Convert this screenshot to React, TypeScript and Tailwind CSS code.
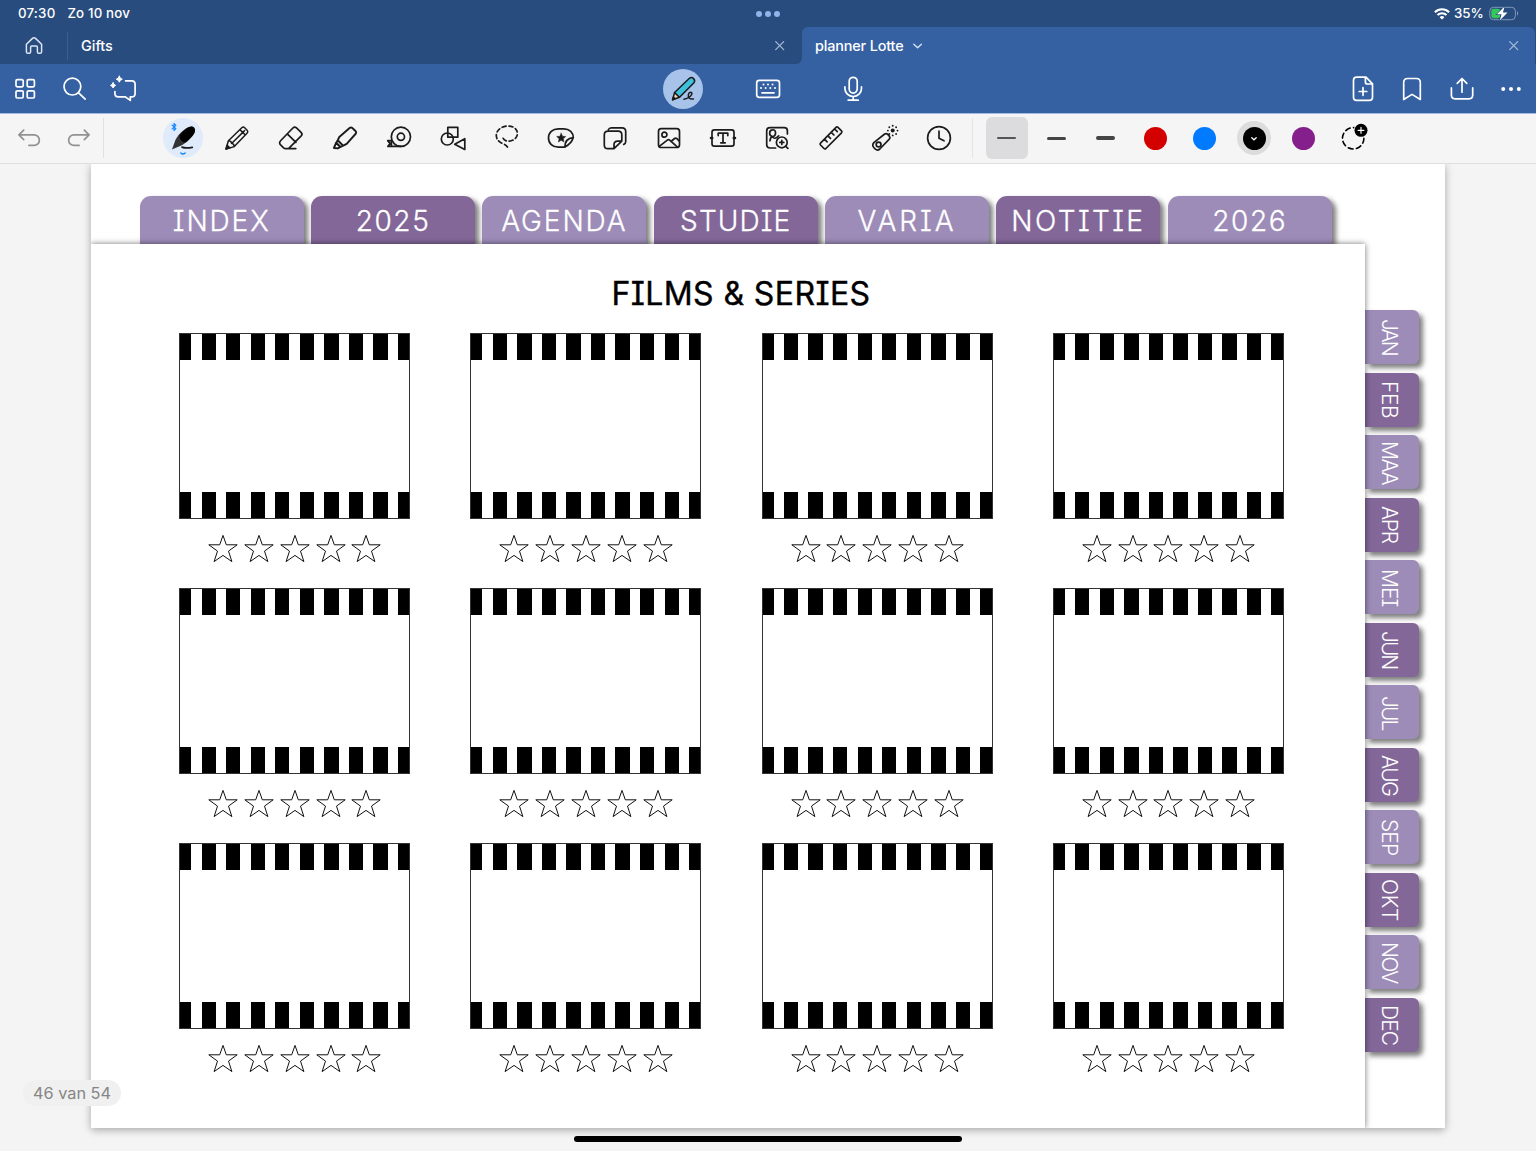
import React from "react";

type IcoProps = { children: React.ReactNode; className?: string; sw?: number };

const Ico = ({ children, className = "text-[#1b1b1b]", sw = 1.7 }: IcoProps) => (
  <svg
    width="32"
    height="32"
    viewBox="-16 -16 32 32"
    fill="none"
    stroke="currentColor"
    strokeWidth={sw}
    strokeLinecap="round"
    strokeLinejoin="round"
    className={`shrink-0 overflow-visible ${className}`}
  >
    {children}
  </svg>
);

const StatusBar = () => (
  <div className="flex h-[27px] items-center bg-[#294c7e] text-[13.3px] font-medium text-white">
    <div className="flex w-[751px] gap-[12px] pl-[18px]">
      <span className="tracking-[0.2px]">07:30</span>
      <span className="tracking-[0.15px]">Zo 10 nov</span>
    </div>
    <div className="flex w-[34px] justify-center gap-[3px]">
      <i className="size-[6px] rounded-full bg-[#8fb3ea]" />
      <i className="size-[6px] rounded-full bg-[#8fb3ea]" />
      <i className="size-[6px] rounded-full bg-[#8fb3ea]" />
    </div>
    <div className="ml-auto flex items-center pr-[17px]">
      <svg width="16" height="12" viewBox="0 0 16 12" fill="none" stroke="white" strokeWidth="2.1">
        <path d="M0.9 4.2a10.2 10.2 0 0 1 14.2 0" />
        <path d="M3.5 7a6.5 6.5 0 0 1 9 0" />
        <path d="M8 11.6 5.6 9.2a3.4 3.4 0 0 1 4.8 0Z" fill="white" stroke="none" />
      </svg>
      <span className="ml-[4px] mr-[5px] w-[30px]">35%</span>
      <svg width="30" height="16" viewBox="0 0 30 16" fill="none">
        <rect x="0.8" y="1.3" width="25.6" height="12.4" rx="3.8" stroke="#7f99bd" />
        <path d="M28 5.3c1.5.6 1.5 3.8 0 4.4Z" fill="#7f99bd" />
        <rect x="2.3" y="2.8" width="9" height="9.4" rx="2.4" fill="#34c759" />
        <path d="M15.6.5 7.9 8.3h4.6L10.8 14.5l7.7-7.9h-4.6Z" fill="white" stroke="#294c7e" strokeWidth="1.2" paintOrder="stroke" />
      </svg>
    </div>
  </div>
);

const Close = () => (
  <Ico className="text-[#a9bcd9]" sw={1.2}>
    <path d="M-4.3-4.3 3.7 3.7M3.7-4.3-4.3 3.7" />
  </Ico>
);

const TabBar = () => (
  <div className="flex h-[37px] bg-[#3561a3] text-[14.4px] font-medium text-white">
    <div className="flex w-[802px] items-center rounded-br-[6px] bg-[#294c7e]">
      <div className="flex w-[67px] justify-center">
        <Ico className="text-[#dbe5f4]" sw={1.5}>
          <path d="M-7.6-1.7-1.5-7.6q1.5-1.3 3 0L7.6-1.7V5.7q0 1.6-1.6 1.6H4.8q-1.4 0-1.4-1.4V1.3q0-1.2-1.2-1.2h-4.4q-1.2 0-1.2 1.2v4.6q0 1.4-1.4 1.4H-6q-1.6 0-1.6-1.6Z" />
        </Ico>
      </div>
      <div className="h-[28px] w-px bg-[#3e5f8d]" />
      <span className="ml-[13px]">Gifts</span>
      <div className="ml-auto mr-[6px]">
        <Close />
      </div>
    </div>
    <div className="flex flex-1 bg-[#294c7e]">
      <div className="mr-px flex flex-1 items-center rounded-t-[6px] bg-[#3561a3] pl-[13px]">
        <span className="w-[89px] whitespace-nowrap tracking-[-0.15px]">planner Lotte</span>
        <svg width="10" height="6" viewBox="0 0 10 6" fill="none" stroke="#dbe5f4" strokeWidth="1.3" strokeLinecap="round" strokeLinejoin="round" className="ml-[9px]">
          <path d="M0.8 1.2 4.6 4.8 8.4 1.2" />
        </svg>
        <div className="ml-auto mr-[5px]">
          <Close />
        </div>
      </div>
    </div>
  </div>
);

const NavBar = () => (
  <div className="flex h-[50px] items-center border-b border-[#a3bbe0] bg-[#3561a3] text-white">
    <div className="flex w-[641px]">
      <div className="flex w-[49px] justify-center">
        <Ico className="text-white">
          <rect x="-9" y="-9.4" width="7.2" height="7.2" rx="1.3" />
          <rect x="2.2" y="-9.4" width="7.2" height="7.2" rx="1.3" />
          <rect x="-9" y="1.8" width="7.2" height="7.2" rx="1.3" />
          <rect x="2.2" y="1.8" width="7.2" height="7.2" rx="1.3" />
        </Ico>
      </div>
      <div className="flex w-[49px] justify-center">
        <Ico className="text-white">
          <circle cx="-1.6" cy="-2.4" r="8.4" />
          <path d="m4.6 3.8 6.6 6.4" />
        </Ico>
      </div>
      <div className="flex w-[50px] justify-center">
        <Ico className="text-white">
          <path d="M2.6-8.2H8.7q3.4 0 3.4 3.4V4.4Q12.1 7.8 8.7 7.8H7.3V11.4L2.1 7.8H-4.7q-3.4 0-3.4-3.4V2.6" />
          <path d="M-3.7-12.8q.6 2.4 3 3-2.4.6-3 3-.6-2.4-3-3 2.4-.6 3-3ZM-9.9-6.2q.5 2.1 2.6 2.6-2.1.5-2.6 2.6-.5-2.1-2.6-2.6 2.1-.5 2.6-2.6Z" fill="currentColor" strokeWidth="1" />
        </Ico>
      </div>
    </div>
    <div className="flex w-[254px] items-center">
      <div className="flex w-[84px] justify-center">
        <div className="flex size-[40px] items-center justify-center rounded-full bg-[#a8c3e9]">
          <Ico sw={1.5}>
            <path d="m-10.4 10.7 2-7.2 4.9 4.8Z" fill="#f3ddb2" />
            <path d="M-8.4 3.5 6.4-10.7q2.3-1.6 4.2.3t.4 4.1L-3.5 8.3Z" fill="#3fc1dc" />
            <path d="m-10.4 10.7.8-2.7 1.7 1.8Z" fill="currentColor" />
            <path d="M1 10.3q6.2-1.4 7.8-5c.6-2.8-2.7-2.6-3.4.2-.6 2.7 1 5 5 4.4" />
          </Ico>
        </div>
      </div>
      <div className="flex w-[86px] justify-center">
        <Ico className="text-white">
          <rect x="-11.3" y="-8.6" width="22.8" height="17" rx="2.6" />
          <path d="M-6 3.8H6" />
          <g fill="currentColor" stroke="none">
            {[-4.5, 0, 4.5].map((x) => <circle key={x} cx={x} cy="-4.5" r="1" />)}
            {[-7, -2.4, 2.3, 7].map((x) => <circle key={x} cx={x} cy="-1" r="1" />)}
          </g>
        </Ico>
      </div>
      <div className="flex w-[84px] justify-center">
        <Ico className="text-white">
          <rect x="-3.8" y="-11.7" width="8" height="15.8" rx="4" />
          <path d="M-8.1-2.2V-.5a8.3 8 0 0 0 16.6 0V-2.2M.2 7.8v3.2M-4.8 11.2H5.2" />
        </Ico>
      </div>
    </div>
    <div className="ml-auto flex">
      <div className="flex w-[49.5px] justify-center">
        <Ico className="text-white">
          <path d="M-6.3-11.8H3L9.5-5.2V8.2q0 3.1-3.1 3.1H-6.4q-3.1 0-3.1-3.1V-8.7q0-3.1 3.2-3.1ZM2.4-11.5v4.5q0 2 2 2h4.8M0-1.3v7.6M-3.8 2.5h7.6" />
        </Ico>
      </div>
      <div className="flex w-[49.5px] justify-center">
        <Ico className="text-white">
          <path d="M-8.3 10.5v-17q0-4 4-4h8.6q4 0 4 4v17L0 5.4Z" />
        </Ico>
      </div>
      <div className="flex w-[49.5px] justify-center">
        <Ico className="text-white">
          <path d="M0 3.2V-10.2M-4.8-5.7 0-10.5 4.8-5.7M-10.6-1.1V6.1q0 3.7 3.7 3.7H7q3.7 0 3.7-3.7V-1.1" />
        </Ico>
      </div>
      <div className="flex w-[49.5px] justify-center">
        <Ico className="text-white">
          <g fill="currentColor" stroke="none">
            <circle cx="-7.8" r="2" />
            <circle r="2" />
            <circle cx="7.8" r="2" />
          </g>
        </Ico>
      </div>
    </div>
  </div>
);

const tools: React.ReactNode[] = [
  <Ico key="pencil" sw={1.5}>
    <path d="m-11 11 2.4-8.3L4.8-10.3q1.4-1.3 2.9.1l2.4 2.4q1.4 1.4.1 2.9L-2.7 8.6ZM-8.6 2.7l2.4.7.8 2 2 .8.7 2.4M-5.2 5.2 7.6-7.4M2.9-8.4l5.2 5.2" />
    <path d="m-11 11 1.1-3.8 2.7 2.7Z" fill="currentColor" />
  </Ico>,
  <Ico key="eraser">
    <path d="M-10.2 2.5 1.9-10q1.8-1.8 3.6-.1l4.6 4.4q1.8 1.8.1 3.6L-1.7 9.8q-.8.8-2 .8h-1.7q-1.2 0-2-.8L-10.4 6.9q-2.1-2.1.2-4.4ZM-3.7-4.2 4.9 4.4M-3 10.6H4.8" />
  </Ico>,
  <Ico key="highlighter" sw={1.9}>
    <path d="M-7.3 2.3-5.7-1 4.9-10.2q1.2-.9 2.4.2l3.2 3q1.2 1.1.4 2.5L1.7 5.8-1.8 7.7ZM-7.3 2.3-1.8 7.7-4.6 9-8.8 5Z" />
    <path d="m-8.9 5-2.2 5 4 .3 2.5-1.3Z" fill="#fff" />
  </Ico>,
  <Ico key="tape">
    <circle cx="1.9" cy="-1.2" r="9.6" />
    <circle cx="1.9" cy="-1.2" r="3.6" />
    <path d="M1.9 8.4h-13l2.2-2.8-2.4-3h3.6M-7.6 2.6v4.6" />
  </Ico>,
  <Ico key="shapes" sw={1.7}>
    <circle cx="-5.7" cy="1" r="6" />
    <path d="M-5.2-10.6H4.8V-.8H-5.2ZM11.8.7V11.4L1.7 6.2Z" />
  </Ico>,
  <Ico key="lasso">
    <path d="M-3.8.3C-2.6 2.8.4 3.6 3.4 3 8.2 2 11-1.6 10.3-5.8 9.4-10.6 4-12.6-1-11.8c-5.6.8-9.6 4.6-9.7 8.9C-10.8 1.2-8.2 3.8-4.4 5.6-.8 7-.2 7.6 1.4 10.8" strokeDasharray="4 2.9" />
  </Ico>,
  <Ico key="sticker">
    <path d="M3.9 9.1H-2.6C-8.5 9.1-12.5 5.3-12.5 0s4-9.2 9.9-9.2h5.4c5.8 0 9.5 3.8 9.5 8.8Q10.6 5.6 3.9 9.1Zm0 0c0-6 2.3-9 8.4-9.5" />
    <path d="m.2-4.8 1.3 3 3.2.3L2.3.8 3 4 .2 2.3-2.6 4-1.9.8-4.3-1.5l3.2-.3Z" fill="currentColor" strokeWidth=".5" />
  </Ico>,
  <Ico key="notes">
    <path d="M-1 10.6h-6q-3.7 0-3.7-3.7V-3.1q0-3.7 3.7-3.7H3.1q3.7 0 3.7 3.7V3.1Zm0 0V6.8q0-3.7 3.7-3.7h4.1M-6.7-8.2q.8-2 3-2H7q3.7 0 3.7 3.7V3.4q0 2.3-2 3" />
  </Ico>,
  <Ico key="image">
    <rect x="-10.5" y="-9.3" width="21" height="18.8" rx="2.8" />
    <circle cx="-4.6" cy="-3.3" r="2.5" />
    <path d="m-9.7 8.3 8-6.2q1.2-.9 2.4.1l7.5 6.6M2 3.5l3.6-3q1.2-1 2.3.1l2.4 2.5" />
  </Ico>,
  <Ico key="text">
    <rect x="-11" y="-8.1" width="22" height="16.2" rx="2.4" />
    <path d="M-4.8-2.4v-2.4h9.6v2.4M0-4.8V4.8M-2.2 4.8h4.4" />
    <path d="M-12 0h1.2M10.8 0H12" strokeWidth="2.6" />
  </Ico>,
  <Ico key="imagesearch">
    <path d="M1-10.3H7.2q3.2 0 3.2 3.2v3M-1.4 10H-7q-3.3 0-3.3-3.2V-7.1q0-3.2 3.3-3.2h8.4M-4.5-8.2c4-.7 4.1 6.6 0 6.8-4-.4-3.6-6.7 0-6.8ZM-7 2.8q.2-3.5 2.5-4.2Q-2.4 2.3 1.7-2.2" />
    <circle cx="4.8" cy="4.4" r="5.4" />
    <path d="m8.8 8.4 2.1 2M4.8 2.4v4M2.8 4.4h4" />
  </Ico>,
  <Ico key="ruler">
    <path d="M-10.5 5.1 5-10.6q1-.9 2 0l3.5 3.4q.9 1 0 2L-5.1 10.5q-1 .9-1.9 0l-3.5-3.5q-.9-1 0-1.9ZM-6.5 1.2l2.6 2.6M-3.1-2.2-.5.4M.3-5.6l2.6 2.6M3.7-9l2.6 2.6" />
  </Ico>,
  <Ico key="laser">
    <path d="M-10.9 4.3-.3-4q1.7-1 3.1.4l1.5 1.7q1.1 1.5 0 3L-5.2 11q-2.2 2-4.4.2l-1.6-1.7q-2.2-2.5.3-5.2Z" />
    <circle cx="-6.4" cy="6.5" r="2.4" />
    <circle cx="7.7" cy="-7.4" r="2" fill="currentColor" stroke="none" />
    <path d="M7.7-12.2h.01M7.7-2.6h.01M2.9-7.4h.01M12.5-7.4h.01M4.3-10.8h.01M11.1-10.8h.01M4.3-4h.01M11.1-4h.01" strokeWidth="1.9" />
  </Ico>,
  <Ico key="clock">
    <circle r="11.4" />
    <path d="M0-6.8V.3L5 2.8" />
  </Ico>,
];

const ToolBar = () => (
  <div className="flex h-[50px] items-center border-b border-[#dedede] bg-[#f5f5f5] pb-px">
    <div className="flex w-[156px] items-center">
      <div className="flex w-[54px] justify-end">
        <div className="mr-[9px] flex">
          <Ico className="text-[#929292]">
            <path d="m-5.3-7.8-4.8 4.7 4.8 4.7M-9.8-3.1H5.1a5.2 5.2 0 0 1 0 10.5H-.1" />
          </Ico>
        </div>
      </div>
      <div className="flex w-[49px] justify-center">
        <Ico className="text-[#929292]">
          <path d="m5.3-7.8 4.8 4.7-4.8 4.7M9.8-3.1H-5.1a5.2 5.2 0 0 0 0 10.5H.1" />
        </Ico>
      </div>
      <div className="h-[40px] w-px bg-[#e2e2e2]" />
    </div>
    <div className="flex w-[816px] items-center">
      <div className="flex w-[54px] justify-center">
        <div className="flex size-[40px] items-center justify-center rounded-full bg-[#dfebfb]">
          <Ico>
            <path d="M-11 11.4-7.6 2C-4.4-4.4 1.7-9.3 6-11q3.2-1.1 5.2.7 1.6 2 .3 5C9.2-1 4.3 4.4-1.8 7.5Z" fill="#333" stroke="none" />
            <path d="M-3.3-3.1C.4-7.2 3.5-9.9 6.2-11q3-1.1 5 .7 1.6 2 .3 5C9.7-1.9 6.3 1.6 2.4 4.4-.8 5-4.2.6-3.3-3.1Z" fill="#000" stroke="none" />
            <path d="M-1 9.1q3.5 1.5 10.3.3" />
            <path d="m-10.9-12.9 3.8 3.6-1.9 1.8v-7l1.9 1.8-3.8 3.6" stroke="#1684ff" strokeWidth="1.1" />
            <path d="M-2.2 15q2.2 2 4.4 0" stroke="#1684ff" strokeWidth="1.4" />
          </Ico>
        </div>
      </div>
      {tools.map((t, i) => (
        <div key={i} className="flex w-[54px] justify-center">{t}</div>
      ))}
    </div>
    <div className="h-[40px] w-px bg-[#e4e4e4]" />
    <div className="flex items-center pl-[9px]">
      <div className="flex w-[49.5px] justify-center">
        <div className="flex size-[42px] items-center justify-center rounded-[6px] bg-[#dcdcde]">
          <i className="h-[1.5px] w-[19px] rounded-full bg-[#555]" />
        </div>
      </div>
      <div className="flex w-[49.5px] justify-center"><i className="h-[3px] w-[19px] rounded-full bg-[#444]" /></div>
      <div className="flex w-[49.5px] justify-center"><i className="h-[4.5px] w-[19px] rounded-full bg-[#444]" /></div>
      <div className="flex w-[49.5px] justify-center"><i className="size-[23px] rounded-full bg-[#d40000]" /></div>
      <div className="flex w-[49.5px] justify-center"><i className="size-[23px] rounded-full bg-[#007aff]" /></div>
      <div className="flex w-[49.5px] justify-center">
        <div className="flex size-[34px] items-center justify-center rounded-full bg-[#dcdcdc]">
          <div className="flex size-[23px] items-center justify-center rounded-full bg-black">
            <svg width="6" height="4" viewBox="0 0 6 4" fill="none" stroke="white" strokeWidth="1.3" strokeLinecap="round" className="mt-[2px]">
              <path d="m.8.8 2.2 2 2.2-2" />
            </svg>
          </div>
        </div>
      </div>
      <div className="flex w-[49.5px] justify-center"><i className="size-[23px] rounded-full bg-[#841f8c]" /></div>
      <div className="flex w-[49.5px] justify-center">
        <Ico>
          <circle r="10.7" cx=".2" cy=".3" strokeDasharray="5 3.4" strokeWidth="1.6" stroke="#000" />
          <circle cx="8" cy="-7.7" r="7.2" fill="#f5f5f5" stroke="none" />
          <circle cx="8" cy="-7.7" r="6.5" fill="#000" stroke="none" />
          <path d="M8-10.6v5.8M5.1-7.7h5.8" stroke="#fff" strokeWidth="1.2" />
        </Ico>
      </div>
    </div>
  </div>
);

const topTabs = [
  { label: "INDEX", spacing: "tracking-[1.9px]" },
  { label: "2025", spacing: "tracking-[1.6px]" },
  { label: "AGENDA", spacing: "tracking-[1.9px]" },
  { label: "STUDIE", spacing: "tracking-[1.1px]" },
  { label: "VARIA", spacing: "tracking-[3px]" },
  { label: "NOTITIE", spacing: "tracking-[2.4px]" },
  { label: "2026", spacing: "tracking-[1.6px]" },
];

const months = [
  { label: "JAN", spacing: "tracking-[-1.9px]" },
  { label: "FEB", spacing: "tracking-[-0.4px]" },
  { label: "MAA", spacing: "tracking-[-1.4px]" },
  { label: "APR", spacing: "tracking-[-1.3px]" },
  { label: "MEI", spacing: "tracking-[-1px]" },
  { label: "JUN", spacing: "tracking-[-2px]" },
  { label: "JUL", spacing: "tracking-[-1.9px]" },
  { label: "AUG", spacing: "tracking-[-1.5px]" },
  { label: "SEP", spacing: "tracking-[-0.9px]" },
  { label: "OKT", spacing: "tracking-[-0.3px]" },
  { label: "NOV", spacing: "tracking-[-1.4px]" },
  { label: "DEC", spacing: "tracking-[-0.9px]" },
];

const Perforation = () => (
  <div className="flex h-[25.5px] justify-between">
    <i className="w-[11px] bg-black" />
    {Array.from({ length: 8 }, (_, i) => <i key={i} className="w-[14.3px] bg-black" />)}
    <i className="w-[11.3px] bg-black" />
  </div>
);

const Film = () => (
  <div className="h-[255px] w-[231px]">
    <div className="flex h-[185.5px] flex-col justify-between border border-[#333]">
      <Perforation />
      <Perforation />
    </div>
    <div className="flex justify-center gap-[5.8px] pt-[15.5px]">
      {[0, 1, 2, 3, 4].map((i) => (
        <svg key={i} width="30" height="29" viewBox="-15 -15 30 29" fill="none" stroke="#111" strokeWidth="1">
          <path d="M0-13.6 3.3-4.2H14.2L5.5 2.1 8.9 12.6 0 6.4-8.9 12.6-5.5 2.1-14.2-4.2H-3.3Z" />
        </svg>
      ))}
    </div>
  </div>
);

const Planner = () => (
  <div className="ml-[91px] flex h-[964px] w-[1354px] flex-col bg-white shadow-[0_2px_8px_rgba(0,0,0,0.32)]">
    <div className="flex h-[80px] gap-[7.35px] pl-[48.7px] pt-[32px]">
      {topTabs.map((t, i) => (
        <div
          key={t.label}
          className={`flex h-[48px] w-[164px] items-center justify-center rounded-t-[11px] pt-[2px] text-[28px] leading-none text-white shadow-[4px_3px_5px_rgba(0,0,0,0.5)] ${t.spacing} ${i % 2 ? "bg-[#836799]" : "bg-[#9d8cb8]"}`}
        >
          <span className="font-light [-webkit-text-stroke:0.3px_white]">{t.label}</span>
        </div>
      ))}
    </div>
    <div className="flex h-[884px]">
      <div className="relative z-10 w-[1274px] bg-white shadow-[0_0_6px_rgba(0,0,0,0.55)] [clip-path:inset(-8px_-8px_0_0)]">
        <h1 className="flex h-[89px] items-center justify-center pl-[26px] pt-[11px] text-[32px] tracking-[0.4px] text-black [-webkit-text-stroke:0.4px_black]">
          FILMS &amp; SERIES
        </h1>
        <div className="grid grid-cols-[repeat(4,231px)] gap-x-[60.2px] pl-[88.3px]">
          {Array.from({ length: 12 }, (_, i) => <Film key={i} />)}
        </div>
      </div>
      <div className="flex flex-col gap-[8.5px] pt-[66.3px]">
        {months.map((m, i) => (
          <div
            key={m.label}
            className={`flex h-[54px] w-[53.5px] items-center justify-center rounded-r-[6px] pr-[5px] text-[21px] leading-none text-white shadow-[4px_4px_5px_rgba(0,0,0,0.5)] [writing-mode:vertical-rl] ${m.spacing} ${i % 2 ? "bg-[#836799]" : "bg-[#9d8cb8]"}`}
          >
            <span className="font-light">{m.label}</span>
          </div>
        ))}
      </div>
    </div>
  </div>
);

export default function App() {
  return (
    <div className="relative h-[1151px] w-[1536px] overflow-hidden bg-[#f4f4f4] font-['Inter',sans-serif]">
      <StatusBar />
      <TabBar />
      <NavBar />
      <ToolBar />
      <div className="overflow-hidden pb-[23px] [font-feature-settings:'cv08']">
        <Planner />
      </div>
      <div className="absolute left-[23px] top-[1080px] z-20 flex h-[26px] w-[98px] items-center justify-center rounded-full bg-[#f0f0f0] text-[16.3px] text-[#868686]">
        46 van 54
      </div>
      <div className="absolute left-[574px] top-[1136px] h-[6px] w-[388px] rounded-full bg-black" />
    </div>
  );
}
